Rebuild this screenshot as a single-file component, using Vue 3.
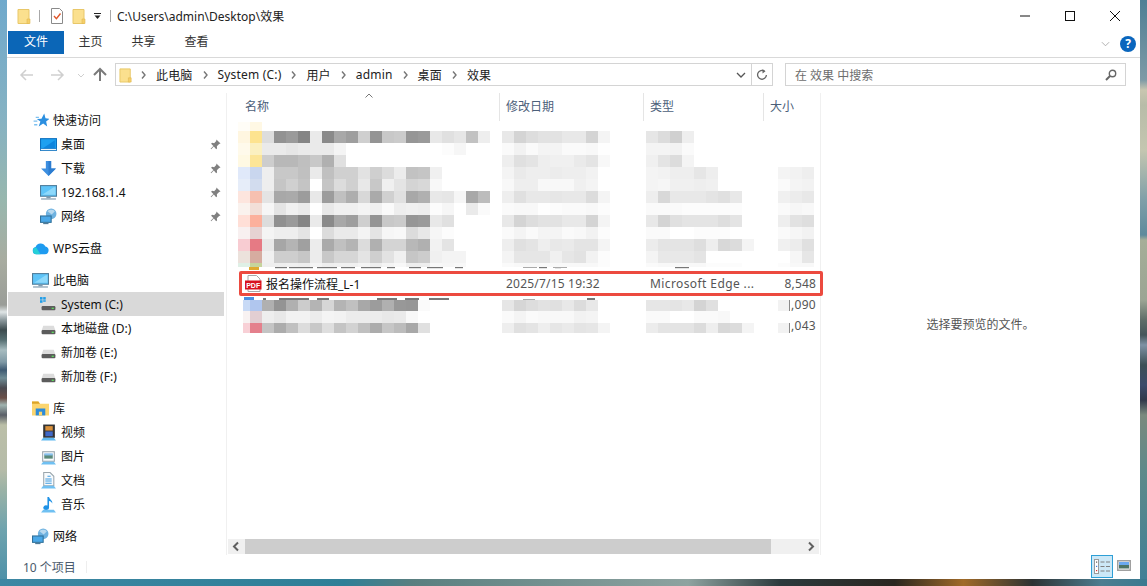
<script setup>
const folder = '<path d="M1 1.5h11v14H1z" fill="#fbe08e" stroke="#e8c768" stroke-width="1"/><path d="M10 11h3v4.5h-3z" fill="#f5cf6a" stroke="#e0b850" stroke-width=".6"/>'
const drive = '<path d="M3 5.5h10l1.5 4.5h-13z" fill="#dcdcdc"/><rect x="1.5" y="9.5" width="13" height="4" rx="1" fill="#5c5c5c"/><rect x="11" y="11" width="2" height="1.2" fill="#5de05d"/>'
const icons = {
  star: '<path d="M11.5 1.5l1.2 4.3 3.8.6-3.2 2.6 1 4.6-3.8-2.8-4.2 2.8 1.6-4.6-3.4-2.4 4.4-.2z" fill="#2b8fe0"/><path d="M3.5 5h3M1.5 8.5h3.5M2 12h3" stroke="#7cc0f0" stroke-width="1.2"/>',
  desk: '<rect x="0.5" y="2.5" width="15" height="11" fill="#1ea0f0" stroke="#0b6fbe"/><path d="M2 12L14 4v8z" fill="#0f85dd"/><rect x="0.5" y="12" width="15" height="1.6" fill="#fff" stroke="#0b6fbe" stroke-width=".6"/>',
  down: '<path d="M5.5 1h5v7h4.5L8 15 1 8h4.5z" fill="#3d8fe0"/><path d="M8 1h2.5v7H15l-7 7z" fill="#2c7cd0"/>',
  pc: '<rect x="0.5" y="1.5" width="15" height="10" fill="#5ec4f8" stroke="#4f7c99"/><path d="M2 10L13 3h1.5v7z" fill="#8ed9fb"/><rect x="6" y="12" width="4" height="1.5" fill="#7f9cb0"/><rect x="1" y="13.5" width="14" height="1.2" fill="#8aa3b5"/>',
  net: '<circle cx="10.5" cy="5.5" r="5" fill="#6fb2e0"/><path d="M7 3c2-1.8 5-1.8 7 0l-3 3z" fill="#b9d9ef"/><rect x="0.5" y="7.5" width="10" height="6" fill="#4aa8e8" stroke="#2f6f98"/><rect x="3" y="14" width="5" height="1.2" fill="#4f7c99"/>',
  cloud: '<path d="M4 13.5a3.5 3.5 0 0 1-.6-6.9A5 5 0 0 1 12.6 6a3.8 3.8 0 0 1-.4 7.5z" fill="#1e9bf0"/><path d="M1 10a3 3 0 0 1 3-3l4 6.5H4a3.5 3.5 0 0 1-3-3.5z" fill="#25d0d8"/>',
  sys: '<rect x="0" y="1" width="2.4" height="2.4" fill="#1f9de8"/><rect x="3" y="1" width="2.4" height="2.4" fill="#1f9de8"/><rect x="0" y="4" width="2.4" height="2.4" fill="#1f9de8"/><rect x="3" y="4" width="2.4" height="2.4" fill="#1f9de8"/>' + drive,
  drive,
  lib: '<path d="M0 1.5h6l1.5 2H16v11H0z" fill="#fcd56e"/><path d="M0 1.5h6l1.5 2H0z" fill="#dca428"/><rect x="3.5" y="8" width="9" height="6.5" fill="#2d8bd8"/><rect x="6.5" y="11" width="3" height="3.5" fill="#fcd56e"/>',
  vid: '<rect x="3" y="0.5" width="11" height="12.5" fill="#333"/><rect x="5" y="2" width="7" height="4.2" fill="#d9903a"/><rect x="5" y="7" width="7" height="4.5" fill="#3f68c8"/><path d="M1 15.5l2-2.5h10l2 2.5z" fill="#5fb8f0"/>',
  pic: '<rect x="2.5" y="3.5" width="11" height="9" fill="#f8fbfd" stroke="#9aa6ad"/><rect x="4" y="6" width="8" height="4" fill="#5a8a7a"/><rect x="4" y="5" width="8" height="2" fill="#88c0ee"/><path d="M1 15.5l2-2.5h10l2 2.5z" fill="#6fc0f2"/>',
  doc: '<path d="M3.5 0.5h6l3.5 3.5v9h-9.5z" fill="#f8fbfd" stroke="#9aa6ad"/><path d="M7 4h3M5 6.5h6M5 8.5h6M5 10.5h6" stroke="#3d9be0" stroke-width="1"/><path d="M1 15.5l2-2.5h10l2 2.5z" fill="#6fc0f2"/>',
  mus: '<path d="M7 1h1.5c.5 2.5 3.5 3 3 6-.6-1.5-1.5-2-3-2.3V11a2.7 2.2 0 1 1-1.5-2z" fill="#1f92e6"/><path d="M1 15.5l2-2.5h10l2 2.5z" fill="#6fc0f2"/>',
}
const pin = '<path d="M7 .5l4.5 4.5-1.6.4-2.4 2.6.2 2.4-1 .9L4.2 8.3 1.3 11.3l-.6-.6 3-3L1.2 5.2l1-1 2.3.3 2.3-2.4z" fill="#808080"/>'

const groups = [
  [
    { t: '快速访问', i: 'star', top: true },
    { t: '桌面', i: 'desk', p: true },
    { t: '下载', i: 'down', p: true },
    { t: '192.168.1.4', i: 'pc', p: true },
    { t: '网络', i: 'net', p: true },
  ],
  [{ t: 'WPS云盘', i: 'cloud', top: true }],
  [
    { t: '此电脑', i: 'pc', top: true },
    { t: 'System (C:)', i: 'sys', sel: true },
    { t: '本地磁盘 (D:)', i: 'drive' },
    { t: '新加卷 (E:)', i: 'drive' },
    { t: '新加卷 (F:)', i: 'drive' },
  ],
  [
    { t: '库', i: 'lib', top: true },
    { t: '视频', i: 'vid' },
    { t: '图片', i: 'pic' },
    { t: '文档', i: 'doc' },
    { t: '音乐', i: 'mus' },
  ],
  [{ t: '网络', i: 'net', top: true }],
]

const crumbs = ['此电脑', 'System (C:)', '用户', 'admin', '桌面', '效果']

const parse = (s) => (s ? s.split(' ').map((c) => (c.length === 2 ? `#${c}${c}${c}` : `#${c}`)) : [])
const row = (h, name, date, type, size) => ({ h, cols: [name, date, type, size].map(parse) })

const topRows = [
  row(9, 'fffdf7 fff8e4'),
  row(12, 'fff6e0 fde38f dd 92 9a 85 ea 8a a8 9e cf 94 c8 cb 96 9a e8 e0 e6 c2 ee', 'e8 d4 dd e2 e2 e8 e8 d4 f4', 'e6 dc d0 ee'),
  row(12, 'fffaeb fbf0c0 ea ea e6 ea ea ea f4 ff ff ff ff ff ff ff ff fc f6', 'fa f2 fa f4 f4 fa fa f8 fe', 'f4 f4 f2 fa'),
  row(12, 'fff9e3 fce597 cd b8 b8 bf c8 b0 e0', 'ee e0 e4 ee f0 f0 ea e4 f8', 'f0 e4 dc f4'),
  row(12, 'e0e9fa c9d6ee ee c8 c8 c0 ea c0 d0 d0 e2 cf dc ec c2 c5 f0', 'f4 ea ee ee ec ee ee f2', 'f4 f2 ee ee e6 ee', 'f4 f2 ee'),
  row(12, 'e6edf9 d2dcee ee c5 d0 c4 ff c5 dc d0 e8 c8 f0 e4 d4 d8 f8', 'f8 ee ee f8 f8 f8 f0 f4', 'f4 f6 f0 f0 ee f0', 'fa f4 f2'),
  row(12, 'fde5de f6c0b0 e4 a8 aa 9c e8 9c c0 ae d8 aa d0 e0 a8 b0 e8 e6 f6 a8 bc', 'ee e0 e8 e8 e6 e8 e8 dc f4', 'ee d8 e8 e8 e8 e4 e0 e8', 'f0 ec e8'),
  row(12, 'faf2ee f2dfd8 f6 e4 f0 ea ff e8 f0 f0 f4 f0 fa ee f0 ee fc f6 ff ea fa', 'fa f8 f8 fe fc fa fa f8 fc', 'fa fa fa fc fc fc fc fc', 'fa f6 f8'),
  row(12, 'ffdfd7 fcb09c dc 90 9a 85 ea 8a a8 9e cf 94 c8 cb 96 9a e8 e0', 'e8 d4 dd e2 e2 e8 e8 d4 f4', 'e8 d4 e0 e4 e4 e4 de e4', 'ee e2 de'),
  row(12, 'f8f0f0 e6d2d2 f4 ee ee e4 ff dc ea ea f4 e4 f6 f8 dc e8 f6 fc', 'fa f4 fa f4 f4 fa f8 f2 fc', 'fa fa ff ff fc fc fc', 'fa f6 f2'),
  row(12, 'f8ccd2 e67a84 e8 a6 b4 a0 ec aa c0 b4 dc b0 d4 d4 b8 b0 f2 e4', 'ee e0 e4 ee e8 ea e4 e4 f4', 'ec e4 e4 e4 de ee d8 dc f4', 'f0 ec e0'),
  row(12, 'ece2dc d6aca0 f0 ce ce c6 ec c8 d6 d6 e4 cf e2 f0 c6 cc f0 f4 f4', 'f4 e6 e6 e6 f0 e6 e2 f2 fc', 'f4 e8 e8 e8 e4', 'ff f6 e6'),
  row(4, 'dff0e6 c6d49c ee ee f0 ee f4 ee f0 f0 f4 ee f4 f8 ee ee f8 f6 f8', 'fa f8 f8 f8 f8 f8 f8 f8 fc', 'fa f8 f8 f8 f8 fc fc fc', 'fc f8 f8'),
]
const bottomRows = [
  { ...row(11, 'c8daf6 b0c6ee b0 94 b0 cc b4 d6 b4 c0 a8 9c b0 98 96 fa', 'e6 d6 dd e2 e0 e8 dc e8', 'e6 e6 e4 e8 d4 e0', 'f2'), num: ',090', lh: 10 },
  row(12, 'f8f2f2 e2ced2 ee e8 f2 f2 ec f4 f2 ec ec ec e8 ea f8', 'fa f4 fa f8 f8 f8 f2 f4', 'fa fa ff ff fa fa f8'),
  { ...row(10, 'f8d0d6 e4808c c4 ac c0 dc c8 de c4 d2 c0 ac c6 bc a8 e0', 'ee e0 e4 ee e6 ea e4 e6 f4', 'ec e4 e4 e4 dc ee d8 dc f4', 'f2'), num: ',043', lh: 6 },
]
const tipsTop = [[12, 6], [36, 12], [50, 24], [78, 20], [102, 14], [122, 20], [148, 8], [170, 12], [188, 16], [216, 8], [300, 8], [316, 6], [436, 14]]
const tipsBottom = [[24, 3], [40, 30], [78, 12], [138, 20], [166, 14], [190, 20], [348, 8]]
</script>

<template>
  <div class="desktop">
    <div class="window">
      <header class="titlebar">
        <svg class="ico16 tb-first" viewBox="0 0 16 16" v-html="folder"></svg>
        <i class="tb-sep"></i>
        <svg class="ico16 tb-check" viewBox="0 0 16 16">
          <path d="M2.5 0.5h8l3 3v12h-11z" fill="#fff" stroke="#8a8a8a" />
          <path d="M5 8l2.4 2.6L11.5 5.5" fill="none" stroke="#e0562a" stroke-width="1.4" />
        </svg>
        <svg class="ico16 tb-folder2" viewBox="0 0 16 16" v-html="folder"></svg>
        <svg class="tb-drop" viewBox="0 0 7 6"><path d="M0 .5h7" stroke="#222" /><path d="M.5 2.5h6L3.5 6z" fill="#222" /></svg>
        <i class="tb-sep tb-sep2"></i>
        <span class="tb-path">C:\Users\admin\Desktop\效果</span>
        <div class="win-ctl">
          <svg viewBox="0 0 12 12" class="ctl"><path d="M1 6h10" stroke="#111" /></svg>
          <svg viewBox="0 0 12 12" class="ctl"><rect x="1.5" y="1.5" width="9" height="9" fill="none" stroke="#111" /></svg>
          <svg viewBox="0 0 12 12" class="ctl"><path d="M1 1l10 10M11 1L1 11" stroke="#111" /></svg>
        </div>
      </header>

      <nav class="tabs">
        <span class="tab tab-file">文件</span>
        <span class="tab">主页</span>
        <span class="tab">共享</span>
        <span class="tab">查看</span>
        <svg class="collapse" viewBox="0 0 10 6"><path d="M1 1l4 4 4-4" fill="none" stroke="#a8a8a8" /></svg>
        <span class="help">?</span>
      </nav>

      <div class="address">
        <svg class="navs" viewBox="0 0 108 23">
          <path d="M14 12h12M19 7l-5 5 5 5" fill="none" stroke="#cfcfcf" stroke-width="1.5" />
          <path d="M44 12h12M51 7l5 5-5 5" fill="none" stroke="#cfcfcf" stroke-width="1.5" />
          <path d="M71 11l3 3 3-3" fill="none" stroke="#cfcfcf" />
          <path d="M93 18V6M87 12l6-6 6 6" fill="none" stroke="#7a7a7a" stroke-width="2" />
        </svg>
        <div class="crumbbox">
          <svg class="crumb-folder" viewBox="0 0 16 16" v-html="folder"></svg>
          <template v-for="c in crumbs" :key="c">
            <svg class="chev" viewBox="0 0 5 8"><path d="M1 0.5L4 4 1 7.5" fill="none" stroke="#777" stroke-width="1.4" /></svg>
            <span class="crumb">{{ c }}</span>
          </template>
          <svg class="addr-drop" viewBox="0 0 10 6"><path d="M1 1l4 4 4-4" fill="none" stroke="#555" stroke-width="1.3" /></svg>
          <span class="refresh">
            <svg viewBox="0 0 12 12" class="ref-ico"><path d="M8.5 2.2A4.4 4.4 0 1 0 10.4 6" fill="none" stroke="#666" stroke-width="1.3" /><path d="M6.5 0l3 2.2-3 2.2z" fill="#666" /></svg>
          </span>
        </div>
        <div class="search">
          <span>在 效果 中搜索</span>
          <svg viewBox="0 0 12 12" class="mag"><circle cx="7.5" cy="4.5" r="3.2" fill="none" stroke="#666" stroke-width="1.4" /><path d="M5 7l-4 4" stroke="#666" stroke-width="2" /></svg>
        </div>
      </div>

      <div class="body">
        <aside class="side">
          <div v-for="(g, gi) in groups" :key="gi" class="group">
            <div v-for="it in g" :key="it.t" class="srow" :class="{ top: it.top, sel: it.sel }">
              <svg class="ico" viewBox="0 0 16 16" v-html="icons[it.i]"></svg>
              <span class="stext">{{ it.t }}</span>
              <svg v-if="it.p" class="pin" viewBox="0 0 12 12" v-html="pin"></svg>
            </div>
          </div>
        </aside>

        <main class="main">
          <div class="head">
            <span class="hcell hname">名称
              <svg class="sort" viewBox="0 0 8 5"><path d="M.5 4.5L4 1l3.5 3.5" fill="none" stroke="#777" /></svg>
            </span>
            <span class="hcell">修改日期</span>
            <span class="hcell">类型</span>
            <span class="hcell">大小</span>
          </div>

          <div class="list">
            <div class="mosaic mosaic-top">
              <div v-for="(r, ri) in topRows" :key="ri" class="mrow" :style="{ height: r.h + 'px' }">
                <div v-for="(c, ci) in r.cols" :key="ci" class="mcol">
                  <i v-for="(v, vi) in c" :key="vi" class="cell" :style="{ background: v }"></i>
                </div>
              </div>
            </div>
            <svg class="tips" viewBox="0 0 590 4">
              <rect v-for="t in tipsTop" :key="t[0]" :x="t[0] + 12" y="0" :width="t[1]" height="1.2" fill="#777" />
              <rect x="22" y="0" width="10" height="3" fill="#e0a92e" />
              <rect x="296" y="0" width="14" height="1" fill="#aaa" />
              <rect x="326" y="0" width="14" height="1" fill="#aaa" />
            </svg>
            <div class="hit">
              <svg class="pdf" viewBox="0 0 17 17">
                <path d="M3 .5h8.5L15 4v12.5H3z" fill="#fff" stroke="#a8a8a8" />
                <rect x="0" y="5.5" width="16.5" height="9" fill="#d8121f" />
                <text x="8.2" y="12.6" text-anchor="middle" class="pdf-t">PDF</text>
              </svg>
              <span class="hit-name">报名操作流程_L-1</span>
              <span class="hit-date">2025/7/15 19:32</span>
              <span class="hit-type">Microsoft Edge ...</span>
              <span class="hit-size">8,548</span>
            </div>
            <svg class="tips" viewBox="0 0 590 4">
              <rect v-for="t in tipsBottom" :key="t[0]" :x="t[0] + 12" y="2" :width="t[1]" height="2" fill="#777" />
              <rect x="17" y="1" width="10" height="3" fill="#4a8fe0" />
              <rect x="296" y="3" width="12" height="1" fill="#aaa" />
            </svg>
            <div class="mosaic mosaic-bottom">
              <div v-for="(r, ri) in bottomRows" :key="ri" class="mrow" :style="{ height: r.h + 'px' }">
                <div v-for="(c, ci) in r.cols" :key="ci" class="mcol">
                  <i v-for="(v, vi) in c" :key="vi" class="cell" :style="{ background: v }"></i>
                  <span v-if="ci === 3 && r.num" class="num" :style="{ lineHeight: r.lh + 'px' }">{{ r.num }}</span>
                </div>
              </div>
            </div>
          </div>

          <div class="hscroll">
            <svg class="sarrow" viewBox="0 0 17 14"><path d="M10 3L6 7l4 4" fill="none" stroke="#606060" stroke-width="2" /></svg>
            <div class="track"><div class="thumb"></div></div>
            <svg class="sarrow" viewBox="0 0 17 14"><path d="M7 3l4 4-4 4" fill="none" stroke="#606060" stroke-width="2" /></svg>
          </div>
        </main>

        <section class="preview">选择要预览的文件。</section>
      </div>

      <footer class="status">
        <span class="count">10 个项目</span>
        <i class="status-sep"></i>
        <span class="view view-on">
          <svg viewBox="0 0 20 19" class="view-ico">
            <rect x="2.5" y="2.5" width="4" height="14" fill="#fff" stroke="#9a9a9a" />
            <rect x="4" y="4.5" width="1.2" height="1.2" fill="#555" />
            <rect x="4" y="8.8" width="1.2" height="1.2" fill="#3a7ee0" />
            <rect x="4" y="13" width="1.2" height="1.2" fill="#d83030" />
            <path d="M8.5 5h4M14 5h4M8.5 9.5h4M14 9.5h4M8.5 14h4M14 14h4" stroke="#808080" />
          </svg>
        </span>
        <svg viewBox="0 0 14 11" class="view-big">
          <rect x=".75" y=".75" width="12.5" height="9.5" fill="#fff" stroke="#a0a0a0" stroke-width="1.5" />
          <rect x="2" y="2" width="10" height="3" fill="#6aa8f0" />
          <rect x="2" y="5" width="10" height="3.5" fill="#4d7466" />
        </svg>
      </footer>
    </div>
  </div>
</template>

<style>
html, body { margin: 0; padding: 0; background: #3d87a3; }
</style>

<style scoped>
* { box-sizing: border-box; }
.desktop {
  width: 1147px;
  height: 586px;
  padding: 0 7px 7px;
  overflow: hidden;
  font-family: "Noto Sans", "Noto Sans CJK SC", sans-serif;
  font-size: 12px;
  color: #111;
  background:
    linear-gradient(90deg, #3d87a3 0, #2f7f97 30%, #5a7f80 36%, #8ea3a0 60%, #2c3a3d 68%, #2a2620 78%, #a06a28 84%, #2c3233 90%, #4d7d90 96%, #3a7a90 100%) bottom / 100% 7px no-repeat,
    linear-gradient(180deg, #6fa9cc 0, #86b2c2 120px, #98b7ae 200px, #a8aca0 260px, #9a9d98 305px, #dfe5e6 312px, #8d9a9e 320px, #3c4b4e 330px, #566f72 340px, #a7bcc0 350px, #7f99a5 362px, #3e5a72 370px, #6f8c95 378px, #4a4a50 388px, #6a4f48 398px, #a0b4b0 405px, #5a5f68 415px, #bbbfa8 425px, #b5bba8 470px, #9ab2a6 490px, #6ea3ae 530px, #4a8fa8 586px) left / 7px 100% no-repeat,
    linear-gradient(180deg, #4f7f95 0, #7e9aa6 80px, #c9c6b0 90px, #b8bca8 105px, #c4c6b0 150px, #7f9fa8 200px, #5f8a9c 235px, #a6ae98 240px, #9ba594 300px, #5e6d68 320px, #45565a 335px, #7f92a4 345px, #3d4f55 365px, #3c4a6a 385px, #30384a 400px, #7a8a7e 415px, #5f8a8a 470px, #3f7f97 586px) right / 7px 100% no-repeat;
}
.window {
  width: 1133px;
  height: 579px;
  background: #fff;
  display: flex;
  flex-direction: column;
}

/* title bar */
.titlebar { height: 31px; display: flex; align-items: center; flex: none; }
.ico16 { width: 16px; height: 16px; flex: none; }
.tb-first { margin-left: 10px; }
.tb-sep { width: 1px; height: 12px; background: #a8a8a8; margin-left: 6px; }
.tb-check { margin-left: 9px; }
.tb-folder2 { margin-left: 7px; }
.tb-drop { width: 7px; height: 6px; margin-left: 6px; }
.tb-sep2 { margin-left: 9px; }
.tb-path { margin-left: 6px; color: #222; letter-spacing: 0; }
.win-ctl { margin-left: auto; margin-right: 19px; display: flex; gap: 33px; }
.ctl { width: 12px; height: 12px; display: block; }

/* tabs */
.tabs {
  height: 27px;
  flex: none;
  display: flex;
  border-bottom: 1px solid #d9d9d9;
  padding-left: 1px;
  position: relative;
}
.tab { width: 53px; text-align: center; height: 23px; line-height: 22px; color: #333; }
.tab-file { width: 56px; background: #0b66b7; color: #fff; margin-right: 0; }
.collapse { position: absolute; width: 9px; height: 6px; right: 30px; top: 10px; }
.help {
  position: absolute;
  right: 4px;
  top: 5px;
  width: 16px;
  height: 16px;
  border-radius: 50%;
  background: #0a66bd;
  color: #fff;
  font-weight: 700;
  text-align: center;
  line-height: 16px;
}

/* address */
.address { height: 35px; flex: none; padding-top: 5px; display: flex; align-items: flex-start; }
.navs { width: 108px; height: 23px; flex: none; }
.crumbbox {
  width: 658px;
  height: 23px;
  border: 1px solid #d4d4d4;
  display: flex;
  align-items: center;
  gap: 10px;
  padding-left: 3px;
  position: relative;
}
.crumb-folder { width: 15px; height: 16px; flex: none; margin-right: -3px; }
.chev { width: 5px; height: 8px; flex: none; }
.crumb { color: #222; letter-spacing: .18px; }
.addr-drop { position: absolute; right: 26px; top: 8px; width: 10px; height: 6px; }
.refresh {
  position: absolute;
  right: 0;
  top: 0;
  width: 21px;
  height: 21px;
  border-left: 1px solid #d4d4d4;
  display: flex;
  align-items: center;
  justify-content: center;
}
.ref-ico { width: 12px; height: 12px; }
.search {
  margin-left: 12px;
  width: 341px;
  height: 23px;
  border: 1px solid #d4d4d4;
  display: flex;
  align-items: center;
  justify-content: space-between;
  padding: 0 8px 0 9px;
  color: #6d6d6d;
}
.mag { width: 12px; height: 12px; }

/* body */
.body { height: 462px; flex: none; display: flex; }
.side {
  width: 220px;
  flex: none;
  padding: 15px 0 0 1px;
  border-right: 1px solid #f0f0f0;
  display: flex;
  flex-direction: column;
  gap: 8px;
}
.srow {
  width: 216px;
  height: 24px;
  display: flex;
  align-items: center;
  padding-left: 32px;
  color: #111;
}
.srow.top { padding-left: 24px; }
.srow.sel { background: #d9d9d9; }
.ico { width: 17px; height: 17px; flex: none; }
.stext { margin-left: 4px; flex: 1; }
.pin { width: 11px; height: 11px; margin-right: 3px; flex: none; }

.main {
  width: 594px;
  flex: none;
  display: flex;
  flex-direction: column;
  border-right: 1px solid #f0f0f0;
}
.head {
  height: 27px;
  flex: none;
  display: grid;
  grid-template-columns: 272px 144px 120px 57px;
}
.hcell {
  color: #4c607a;
  padding-left: 6px;
  line-height: 28px;
  border-left: 1px solid #e5e5e5;
  position: relative;
}
.hname { border-left: none; padding-left: 18px; }
.sort { position: absolute; left: 138px; top: 0; width: 8px; height: 5px; }

.list { flex: 1; padding-top: 2px; }
.mrow {
  display: grid;
  grid-template-columns: 264px 144px 132px 40px;
  padding-left: 11px;
}
.mcol { display: flex; height: 100%; position: relative; }
.cell { width: 12px; height: 100%; flex: none; display: block; position: relative; z-index: 1; }
.mosaic-bottom .mcol:first-child .cell:first-child { width: 7px; margin-left: 5px; }
.mosaic-bottom .mcol:last-child .cell { border-right: 1px solid #8a8a8a; }
.num { position: absolute; right: 2px; top: 0; color: #555; white-space: nowrap; letter-spacing: .3px; }

.tips { width: 590px; height: 4px; display: block; }
.hit {
  width: 584px;
  height: 25px;
  margin-left: 12px;
  border: 3px solid #ec4a3f;
  border-radius: 2px;
  display: flex;
  align-items: center;
  position: relative;
  background: #fff;
  color: #555;
}
.pdf { width: 17px; height: 17px; margin-left: 3px; flex: none; }
.pdf-t { font: 700 7px "Liberation Sans", sans-serif; fill: #fff; }
.hit-name { margin-left: 4px; width: 240px; color: #111; flex: none; }
.hit-date { width: 144px; flex: none; letter-spacing: .2px; }
.hit-type { width: 122px; flex: none; letter-spacing: .4px; white-space: nowrap; }
.hit-size { width: 44px; text-align: right; flex: none; letter-spacing: .15px; }

.hscroll { height: 15px; margin: 0 0 1px 1px; width: 591px; display: flex; flex: none; background: #f0f0f0; }
.sarrow { width: 17px; height: 15px; flex: none; }
.track { flex: 1; }
.thumb { width: 526px; height: 15px; background: #cdcdcd; }

.preview {
  flex: 1;
  display: flex;
  align-items: center;
  justify-content: center;
  color: #555;
}

/* status */
.status { height: 24px; flex: none; display: flex; align-items: center; position: relative; }
.count { margin-left: 16px; color: #4a5a6c; }
.status-sep { width: 1px; height: 12px; background: #eee; margin-left: 10px; }
.view {
  position: absolute;
  left: 1084px;
  top: 0;
  width: 22px;
  height: 23px;
  border: 1px solid #2e9fd6;
  background: #cce8f7;
  display: flex;
  align-items: center;
  justify-content: center;
}
.view-ico { width: 20px; height: 19px; }
.view-big { position: absolute; left: 1110px; top: 5px; width: 14px; height: 11px; }
</style>
